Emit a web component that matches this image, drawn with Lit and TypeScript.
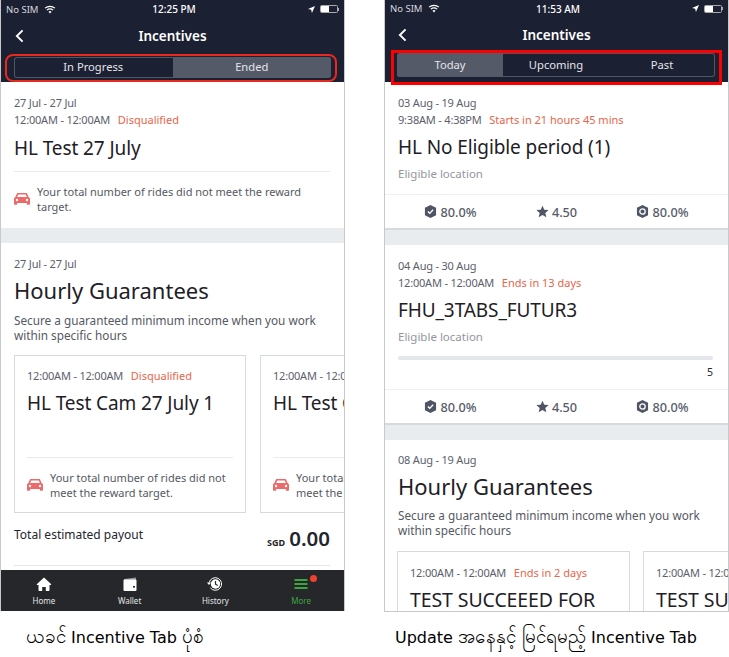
import { LitElement, html, css, svg } from "lit";
import { customElement } from "lit/decorators.js";

const car = html`<svg class="car" viewBox="0 0 16 14"><path fill="#ec6a6a" d="M3.200 1h9.600l2 4.200c.7.300 1.200.9 1.200 1.700V12c0 .5-.3.800-.8.800h-1.600c-.5 0-.8-.3-.8-.8v-1H3.200v1c0 .5-.3.800-.8.800H.8C.3 12.800 0 12.500 0 12V6.900c0-.8.500-1.400 1.200-1.700L3.200 1zM4.300 2.600 3.100 5h9.800l-1.200-2.400H4.300z"/><circle cx="3" cy="8" r="1.200" fill="#fff"/><circle cx="13" cy="8" r="1.200" fill="#fff"/></svg>`;

const shield = html`<svg class="ico" viewBox="0 0 14 14"><path fill="#4f5565" d="M7 0l6 3v8l-6 3-6-3V3z"/><path fill="none" stroke="#fff" stroke-width="1.500" d="M4.200 7l2 2 3.600-3.800"/></svg>`;
const star = html`<svg class="ico" viewBox="0 0 14 14"><path fill="#4f5565" d="M7 .8l1.900 4.300 4.700.4-3.600 3.100 1.100 4.600L7 10.800l-4.100 2.400L4 8.600.4 5.500l4.700-.4z"/></svg>`;
const hexa = html`<svg class="ico" viewBox="0 0 14 14"><path fill="#4f5565" d="M7 0l6 3v8l-6 3-6-3V3z"/><circle cx="7" cy="7" r="2.900" fill="none" stroke="#fff" stroke-width="1.400"/></svg>`;

const wifi = svg`<path fill="none" stroke="#fff" stroke-width="1.300" d="M1 3.500a8.500 8.500 0 0 1 11 0M3 5.700a5.500 5.500 0 0 1 7 0"/><path fill="#fff" d="M4.800 7.500a2.600 2.600 0 0 1 3.400 0L6.500 9.400z"/>`;

function status(time: string) {
  return html`<div class="status">
    <div class="st-l"><span>No SIM</span><svg class="wifi" viewBox="0 0 13 10">${wifi}</svg></div>
    <div class="st-c">${time}</div>
    <div class="st-r">
      <svg class="loc" viewBox="0 0 8 8"><path fill="#fff" d="M8 0 0 3.400l3.600.9.900 3.700z"/></svg>
      <div class="batt"><div class="level"></div></div><div class="nub"></div>
    </div>
  </div>`;
}

function nav() {
  return html`<div class="nav">
    <svg class="back" viewBox="0 0 10 16"><path fill="none" stroke="#fff" stroke-width="2.200" d="M8.500 1.500 2 8l6.500 6.500"/></svg>
    <div class="nav-title">Incentives</div>
  </div>`;
}

const stats = html`<div class="stats">
  <div class="stat">${shield}<span>80.0%</span></div>
  <div class="stat">${star}<span>4.50</span></div>
  <div class="stat">${hexa}<span>80.0%</span></div>
</div>`;

const bottomItems = [
  { label: "Home", icon: svg`<path fill="#fff" d="M8 0.500 15 7c.4.400.2 1-.4 1H13.500v5c0 .6-.4 1-1 1H9.800V10H6.200v4H3.500c-.6 0-1-.4-1-1V8H1.400c-.6 0-.8-.6-.4-1z"/>` },
  { label: "Wallet", icon: svg`<path fill="#8f9196" d="M2 2 14 .5V3H2z"/><rect x="1.500" y="2.500" width="13" height="11.500" rx="1" fill="#fff"/><rect x="11" y="9" width="2" height="1.600" fill="#25272b"/>` },
  { label: "History", icon: svg`<path fill="none" stroke="#fff" stroke-width="1" d="M2.200 5.500A6.300 6.300 0 1 1 3.300 10.800"/><path fill="#fff" d="M0 5.500h4L2 8z"/><circle cx="8.500" cy="7" r="4.700" fill="#fff"/><path fill="none" stroke="#25272b" stroke-width="1.200" d="M8.500 4v3.200l2.200 1.300"/>` },
];

@customElement("app-root")
export class AppRoot extends LitElement {
  static styles = css`
    :host { display: block; width: 729px; height: 657px; background: #fff; font-family: "Noto Sans", sans-serif; overflow: hidden; }
    .page { display: flex; justify-content: space-between; }
    .col { display: flex; flex-direction: column; width: 345px; }
    .phone { overflow: hidden; border: solid #c9c9cb; border-width: 0 1px; display: flex; flex-direction: column; box-sizing: border-box; background: #fff; }
    .l .phone { height: 611px; }
    .r .phone { height: 612px; border-bottom-width: 1px; }
    .caption { color: #000; line-height: 22px; font-size: 16px; font-family: "DejaVu Sans", "Noto Sans", sans-serif; white-space: nowrap; }
    .my { font-size: 18.800px; line-height: 22px; }
    .l .caption { padding-left: 26px; margin-top: 15px; }
    .r .caption { padding-left: 11px; margin-top: 14px; }

    .head { background: #1c2033; color: #fff; flex: none; height: 82px; }
    .status { display: grid; grid-template-columns: 1fr auto 1fr; align-items: center; height: 18px; padding: 0 5px; font-size: 9.500px; }
    .r .status { height: 17px; }
    .st-l { display: flex; align-items: center; gap: 5px; color: #d6d7dc; }
    .wifi { width: 12px; height: 9px; }
    .st-c { font-weight: 500; font-size: 10px; margin-left: 3px; }
    .st-r { display: flex; align-items: center; justify-content: flex-end; }
    .loc { width: 7px; height: 7px; margin-right: 5px; }
    .batt { width: 18px; height: 8px; border: 1px solid #aaa; box-sizing: border-box; border-radius: 1.500px; }
    .level { width: 8px; height: 100%; background: #fff; }
    .nub { width: 1px; height: 3px; background: #aaa; }
    .nav { height: 36px; display: flex; align-items: center; justify-content: center; position: relative; }
    .back { position: absolute; left: 14px; top: 11px; width: 9px; height: 14px; }
    .r .back { left: 13px; }
    .nav-title { font-size: 13.500px; font-weight: 600; }
    .seg-wrap { margin: 0 7px 0 4px; border: 2px solid #e8291c; border-radius: 8px; height: 28px; box-sizing: border-box; padding: 1px 4px 2px 7px; }
    .seg { display: flex; height: 100%; border-radius: 3px; box-shadow: inset 0 0 0 1px #4f5565; overflow: hidden; font-size: 11.200px; color: #e4e5ea; }
    .seg div { flex: 1; display: flex; align-items: center; justify-content: center; padding-bottom: 2px; }
    .seg .on { background: #555a68; }
    .r .seg-wrap { margin: -3px 6px 0; border: 3px solid #f00; border-radius: 0; height: 35px; padding: 0 4px 5px 3px; }

    .body { flex: 1; min-height: 0; overflow: hidden; color: #202229; }
    .sec { padding: 0 14px 0 13px; }
    .meta { font-size: 11px; letter-spacing: -0.2px; line-height: 16.500px; color: #5c606b; white-space: nowrap; }
    .warn { color: #e8654a; margin-left: 5px; letter-spacing: 0; }
    .title { font-size: 19px; letter-spacing: -0.1px; line-height: 28px; color: #1e2026; white-space: nowrap; }
    .rule { height: 1px; background: #e9ebee; }
    .notice { display: flex; align-items: center; gap: 7px; font-size: 11px; line-height: 15px; color: #555963; }
    .car { width: 16px; height: 14px; flex: none; }
    .band { height: 15px; background: #e9ecef; flex: none; }
    .head2 { font-size: 22px; line-height: 32px; color: #1e2026; white-space: nowrap; margin-top: 1px; }
    .desc { font-size: 11.750px; line-height: 15px; color: #555963; margin-top: 7px; }

    .s1 { height: 146px; padding-top: 13px; box-sizing: border-box; }
    .s1 .title { margin-top: 6px; }
    .s1 .rule { margin-top: 9px; }
    .s1 .notice { margin-top: 12px; }

    .s2 { padding-top: 13px; }
    .cards { display: flex; gap: 14px; margin-top: 12px; overflow: hidden; margin-right: -14px; }
    .card { flex: none; width: 232px; height: 158px; box-sizing: border-box; border: 1px solid #d5dbe4; padding: 12px 12px 0; display: flex; flex-direction: column; }
    .card .title { margin-top: 5px; }
    .card .rule { margin-top: auto; }
    .card .notice { margin: 12px 0; }
    .total { display: flex; justify-content: space-between; align-items: flex-start; margin-top: 13px; color: #24262d; font-size: 12px; line-height: 18px; }
    .amt { display: flex; align-items: baseline; gap: 4px; }
    .cur { font-size: 9px; font-weight: 700; }
    .val { font-size: 20.500px; font-weight: 600; line-height: 24px; }
    .s2-rule { height: 1px; background: #e3e6ea; margin-top: 13px; }

    .tab { height: 41px; background: #25272b; display: grid; grid-template-columns: repeat(4, 1fr); flex: none; }
    .t { display: flex; flex-direction: column; align-items: center; padding-top: 7px; font-size: 8px; line-height: 12px; color: #e6e6e6; gap: 4px; position: relative; }
    .t svg { width: 16px; height: 14px; }
    .t.more { color: #3da53f; }
    .dot { position: absolute; top: 5px; left: 50%; margin-left: 9px; width: 7px; height: 7px; border-radius: 50%; background: #f0402f; }

    .r .sec { padding-top: 13px; }
    .r .c1 { height: 112px; box-sizing: border-box; }
    .r .c1 .title, .r .c2 .title { margin-top: 5px; }
    .loc-txt { font-size: 11.500px; line-height: 16px; color: #93969e; margin-top: 5px; }
    .stats { display: grid; grid-template-columns: repeat(3, 1fr); align-items: center; height: 36px; padding: 0 12.500px; box-sizing: border-box; border-top: 1px solid #eef0f2; border-bottom: 2px solid #d7d9dc; }
    .stat { display: flex; align-items: center; justify-content: center; gap: 3px; font-size: 12.700px; font-weight: 500; color: #565b69; }
    .ico { width: 13px; height: 13px; }
    .bar { height: 4px; border-radius: 2px; background: #e3e6ea; margin: 11px 1px 0 0; }
    .num { text-align: right; font-size: 10.500px; line-height: 14px; color: #25272d; margin: 5px 1px 0 0; }
    .r .c2 { height: 144px; box-sizing: border-box; }
    .r .s3 { padding-top: 12px; }
    .r .s3 .desc { margin-top: 6px; }
    .r .s3 .cards { gap: 13px; margin: 13px -14px 0 -1px; }
    .r .card { width: 233px; padding-top: 13px; }
    .r .card .title { font-size: 19.500px; }
  `;

  render() {
    return html`<div class="page">
      <div class="col l">
        <div class="phone">
          <div class="head">
            ${status("12:25 PM")}
            ${nav()}
            <div class="seg-wrap"><div class="seg"><div>In Progress</div><div class="on">Ended</div></div></div>
          </div>
          <div class="body">
            <div class="sec s1">
              <div class="meta">27 Jul - 27 Jul</div>
              <div class="meta">12:00AM - 12:00AM <span class="warn">Disqualified</span></div>
              <div class="title">HL Test 27 July</div>
              <div class="rule"></div>
              <div class="notice">${car}<span>Your total number of rides did not meet the reward target.</span></div>
            </div>
            <div class="band"></div>
            <div class="sec s2">
              <div class="meta">27 Jul - 27 Jul</div>
              <div class="head2">Hourly Guarantees</div>
              <div class="desc">Secure a guaranteed minimum income when you work within specific hours</div>
              <div class="cards">
                ${["HL Test Cam 27 July 1", "HL Test Cam 27 July 2"].map(t => html`<div class="card">
                  <div class="meta">12:00AM - 12:00AM <span class="warn">Disqualified</span></div>
                  <div class="title">${t}</div>
                  <div class="rule"></div>
                  <div class="notice">${car}<span>Your total number of rides did not meet the reward target.</span></div>
                </div>`)}
              </div>
              <div class="total"><span>Total estimated payout</span><div class="amt"><span class="cur">SGD</span><span class="val">0.00</span></div></div>
              <div class="s2-rule"></div>
            </div>
          </div>
          <div class="tab">
            ${bottomItems.map(i => html`<div class="t"><svg viewBox="0 0 16 14">${i.icon}</svg><span>${i.label}</span></div>`)}
            <div class="t more"><svg viewBox="0 0 16 14"><path fill="none" stroke="#3da53f" stroke-width="1.800" d="M1.500 3h13M1.500 7h13M1.500 11h13"/></svg><span>More</span><div class="dot"></div></div>
          </div>
        </div>
        <div class="caption"><span class="my">ယခင်</span> Incentive Tab <span class="my">ပုံစံ</span></div>
      </div>
      <div class="col r">
        <div class="phone">
          <div class="head">
            ${status("11:53 AM")}
            ${nav()}
            <div class="seg-wrap"><div class="seg"><div class="on">Today</div><div>Upcoming</div><div>Past</div></div></div>
          </div>
          <div class="body">
            <div class="sec c1">
              <div class="meta">03 Aug - 19 Aug</div>
              <div class="meta">9:38AM - 4:38PM <span class="warn">Starts in 21 hours 45 mins</span></div>
              <div class="title">HL No Eligible period (1)</div>
              <div class="loc-txt">Eligible location</div>
            </div>
            ${stats}
            <div class="band"></div>
            <div class="sec c2">
              <div class="meta">04 Aug - 30 Aug</div>
              <div class="meta">12:00AM - 12:00AM <span class="warn">Ends in 13 days</span></div>
              <div class="title">FHU_3TABS_FUTUR3</div>
              <div class="loc-txt">Eligible location</div>
              <div class="bar"></div>
              <div class="num">5</div>
            </div>
            ${stats}
            <div class="band"></div>
            <div class="sec s3">
              <div class="meta">08 Aug - 19 Aug</div>
              <div class="head2">Hourly Guarantees</div>
              <div class="desc">Secure a guaranteed minimum income when you work within specific hours</div>
              <div class="cards">
                ${["TEST SUCCEEED FOR", "TEST SUCCEEED FOR"].map(t => html`<div class="card">
                  <div class="meta">12:00AM - 12:00AM <span class="warn">Ends in 2 days</span></div>
                  <div class="title">${t}</div>
                </div>`)}
              </div>
            </div>
          </div>
        </div>
        <div class="caption">Update <span class="my">အနေနှင့် မြင်ရမည့်</span> Incentive Tab</div>
      </div>
    </div>`;
  }
}
